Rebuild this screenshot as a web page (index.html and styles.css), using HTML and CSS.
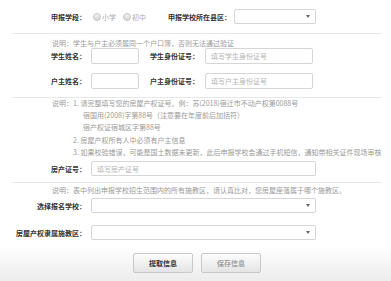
FILE: index.html
```html
<!DOCTYPE html>
<html lang="zh-CN">
<head>
    <meta charset="UTF-8">
    <meta name="viewport" content="width=device-width, initial-scale=1.0">
    <title>入学申报</title>
    <link rel="stylesheet" href="styles.css">
</head>
<body>
    <form class="apply-form">
        <div class="row row-stage">
            <span class="label">申报学段：</span>
            <label class="radio"><span class="dot"></span>小学</label>
            <label class="radio"><span class="dot"></span>初中</label>
            <span class="label-county">申报学校所在县区：</span>
            <select class="select select-county"><option></option></select>
        </div>
        <div class="sep sep-first"></div>
        <p class="note note-single">说明：学生与户主必须属同一个户口簿，否则无法通过验证</p>

        <div class="row row-person">
            <span class="label">学生姓名：</span>
            <input type="text" class="input input-name">
            <span class="label label-id">学生身份证号：</span>
            <input type="text" class="input input-id" placeholder="填写学生身份证号">
        </div>
        <div class="row row-person row-owner">
            <span class="label">户主姓名：</span>
            <input type="text" class="input input-name">
            <span class="label label-id">户主身份证号：</span>
            <input type="text" class="input input-id" placeholder="填写户主身份证号">
        </div>
        <div class="sep sep-second"></div>

        <div class="note note-list">
            <p>说明：1. 请完整填写您的房屋产权证号。例：苏(2018)宿迁市不动产权第0088号</p>
            <p class="indent-deep">宿国用(2008)字第88号（注意要在年度前后加括符）</p>
            <p class="indent-deep">宿产权证宿城区字第88号</p>
            <p class="indent">2. 房屋产权所有人中必须有户主信息</p>
            <p class="indent">3. 如果校验错误，可能是国土数据未更新，此后申报学校会通过手机短信，通知带相关证件现场审核</p>
        </div>
        <div class="row row-house">
            <span class="label">房产证号：</span>
            <input type="text" class="input input-wide" placeholder="填写房产证号">
        </div>
        <div class="sep sep-third"></div>
        <p class="note note-area">说明：表中列出申报学校招生范围内的所有施教区，请认真比对，您房屋座落属于哪个施教区。</p>

        <div class="row row-school">
            <span class="label">选择报名学校：</span>
            <select class="select select-wide"><option></option></select>
        </div>
        <div class="row row-area">
            <span class="label">房屋产权隶属施教区：</span>
            <select class="select select-wide"><option></option></select>
        </div>
    </form>

    <div class="footer">
        <button type="button" class="btn btn-fetch">提取信息</button>
        <button type="button" class="btn btn-save">保存信息</button>
    </div>
</body>
</html>
```

FILE: styles.css
```css
body {
    margin: 0;
    font-family: "Noto Sans CJK SC", "Liberation Sans", sans-serif;
    font-size: 7px;
    color: #333;
    background: #fff;
    overflow: hidden;
}

.apply-form {
    padding-top: 9px;
}

p {
    margin: 0;
}

.row {
    display: flex;
    align-items: center;
    white-space: nowrap;
}

.label {
    flex: none;
    width: 86px;
    text-align: right;
    font-weight: bold;
    color: #333;
}

.row-stage {
    height: 15px;
}
.radio {
    display: flex;
    align-items: center;
    color: #aaa;
    margin-left: 7px;
}
.radio + .radio {
    margin-left: 7px;
}
.dot {
    width: 6px;
    height: 6px;
    border: 1px solid #c4c4c4;
    border-radius: 50%;
    background: linear-gradient(#f2f2f2, #d8d8d8);
    margin-right: 1px;
}
.label-county {
    flex: none;
    font-weight: bold;
    margin-left: 22px;
    width: 66px;
}

.select,
.input {
    box-sizing: border-box;
    height: 15px;
    border: 1px solid #d6d6d6;
    border-radius: 2px;
    background-color: #fff;
    font-family: inherit;
    font-size: 7px;
    padding: 0 5px;
    margin: 0;
    outline: none;
}
.select {
    appearance: none;
    -webkit-appearance: none;
    background-image: url("data:image/svg+xml,%3Csvg xmlns='http://www.w3.org/2000/svg' width='4' height='3'%3E%3Cpath d='M0 0h4L2 3z' fill='%23666'/%3E%3C/svg%3E");
    background-repeat: no-repeat;
    background-position: right 5px center;
}
.input::placeholder {
    color: #b4b4b4;
}
.select-county {
    width: 82px;
}

.sep {
    height: 1px;
    background: #e8e8e8;
    margin: 0 9px 0 12px;
}
.sep-first {
    margin-top: 9px;
}

.note {
    color: #9a9a9a;
    padding-left: 52px;
    white-space: nowrap;
}
.note-single {
    line-height: 10px;
    margin-top: 4px;
}

.row-person {
    height: 16px;
}
.row-person .input {
    height: 16px;
}
.row-owner {
    margin-top: 9px;
}
.input-name {
    width: 48px;
    margin-left: 5px;
}
.label-id {
    width: 60px;
}
.input-id {
    width: 108px;
    margin-left: 6px;
}

.sep-second {
    margin-top: 8px;
}
.note-list {
    line-height: 12.2px;
    margin-top: -1px;
}
.note-list .indent {
    padding-left: 21px;
}
.note-list .indent-deep {
    padding-left: 31px;
}

.row-house {
    margin-top: 3px;
}
.input-wide,
.select-wide {
    width: 225px;
    margin-left: 5px;
}

.sep-third {
    margin-top: 6px;
}
.note-area {
    line-height: 10px;
    margin-top: 2px;
}

.row-school {
    margin-top: 3px;
}
.row-area {
    margin-top: 12px;
}

.footer {
    margin-top: 7px;
    height: 34px;
    display: flex;
    justify-content: center;
    align-items: flex-start;
    gap: 8px;
    padding-top: 6px;
    padding-left: 3px;
    box-sizing: border-box;
    background: linear-gradient(#fff, #ececec);
}
.btn {
    width: 60px;
    height: 20px;
    border: 1px solid #c9c9c9;
    border-radius: 2px;
    background: linear-gradient(#fdfdfd, #e4e4e4);
    font-family: inherit;
    font-size: 7px;
    font-weight: bold;
    cursor: pointer;
}
.btn-fetch {
    color: #333;
}
.btn-save {
    color: #a0a0a0;
}
```
